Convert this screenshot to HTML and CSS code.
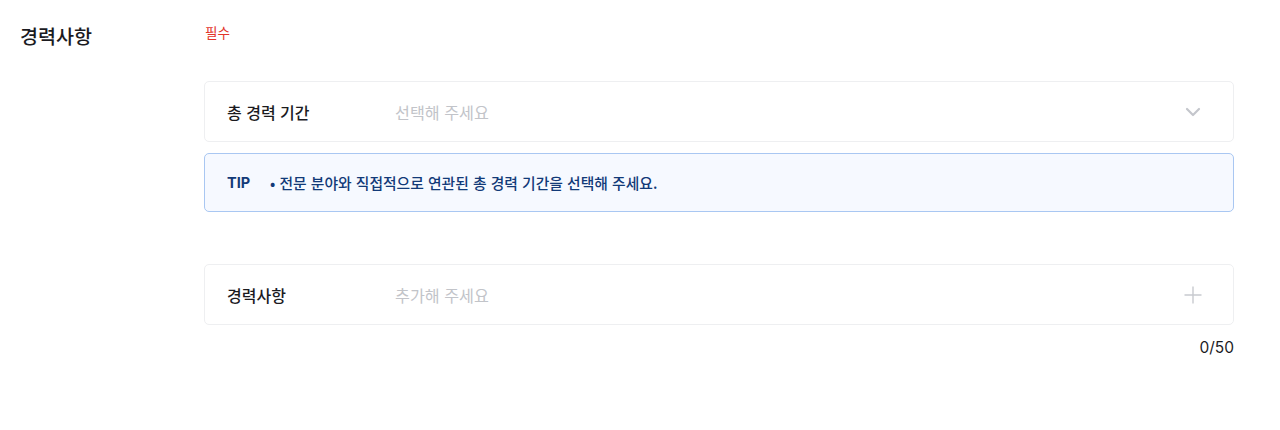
FILE: index.html
```html
<!DOCTYPE html>
<html lang="ko">
<head>
<meta charset="utf-8">
<link rel="stylesheet" href="styles.css">
</head>
<body>
<div class="section">
  <div class="side">
    <h2 class="title">경력사항</h2>
  </div>
  <div class="main">
    <div class="required">필수</div>
    <div class="field">
      <span class="label">총 경력 기간</span>
      <span class="placeholder">선택해 주세요</span>
      <svg class="icon" width="16" height="10" viewBox="0 0 16 10"><path d="M2 2 L8 8 L14 2" fill="none" stroke="#c4c6cc" stroke-width="2.2" stroke-linecap="round" stroke-linejoin="round"/></svg>
    </div>
    <div class="tip">
      <span class="tip-label">TIP</span>
      <span class="tip-text">• 전문 분야와 직접적으로 연관된 총 경력 기간을 선택해 주세요.</span>
    </div>
    <div class="field field-second">
      <span class="label">경력사항</span>
      <span class="placeholder">추가해 주세요</span>
      <svg class="icon" width="18" height="18" viewBox="0 0 18 18"><path d="M9 0.5 V17.5 M0.5 9 H17.5" fill="none" stroke="#c8cacf" stroke-width="1.4"/></svg>
    </div>
    <div class="count">0/50</div>
  </div>
</div>
</body>
</html>
```
FILE: styles.css
```css
* { box-sizing: border-box; }
body {
  margin: 0;
  background: #fff;
  font-family: "Noto Sans CJK KR", "Noto Sans", sans-serif;
  color: #1b1b1f;
}
.section {
  display: flex;
  padding-top: 20px;
}
.side {
  width: 204px;
  padding-left: 20px;
  flex-shrink: 0;
}
.title {
  margin: 0;
  font-size: 19.6px;
  line-height: 32px;
  font-weight: 500;
  color: #1b1b1f;
}
.main {
  width: 1030px;
}
.required {
  font-size: 13.6px;
  line-height: 24px;
  color: #e2352a;
  padding-left: 1px;
  margin-bottom: 37px;
}
.field {
  height: 61px;
  border: 1px solid #eeeff1;
  border-radius: 5px;
  display: flex;
  align-items: center;
  padding: 0 32px 0 22px;
}
.label {
  width: 168px;
  font-size: 16px;
  font-weight: 500;
  color: #1b1b1f;
}
.placeholder {
  flex: 1;
  font-size: 16.2px;
  color: #c2c4c9;
}
.tip {
  margin-top: 11px;
  height: 59px;
  border: 1px solid #a9c7f2;
  border-radius: 5px;
  background: #f6f9ff;
  display: flex;
  align-items: center;
  padding-left: 22px;
  color: #123a78;
}
.tip-label {
  width: 43px;
  font-family: "Inter", "Noto Sans CJK KR", sans-serif;
  font-weight: 700;
  font-size: 14.5px;
}
.tip-text {
  font-size: 14.8px;
  font-weight: 500;
}
.field-second {
  margin-top: 52px;
}
.field-second .icon { margin-right: -1px; }
.count {
  margin-top: 13px;
  text-align: right;
  font-family: "Inter", sans-serif;
  font-size: 15.5px;
  line-height: 20px;
  color: #1b1b1f;
}
```
